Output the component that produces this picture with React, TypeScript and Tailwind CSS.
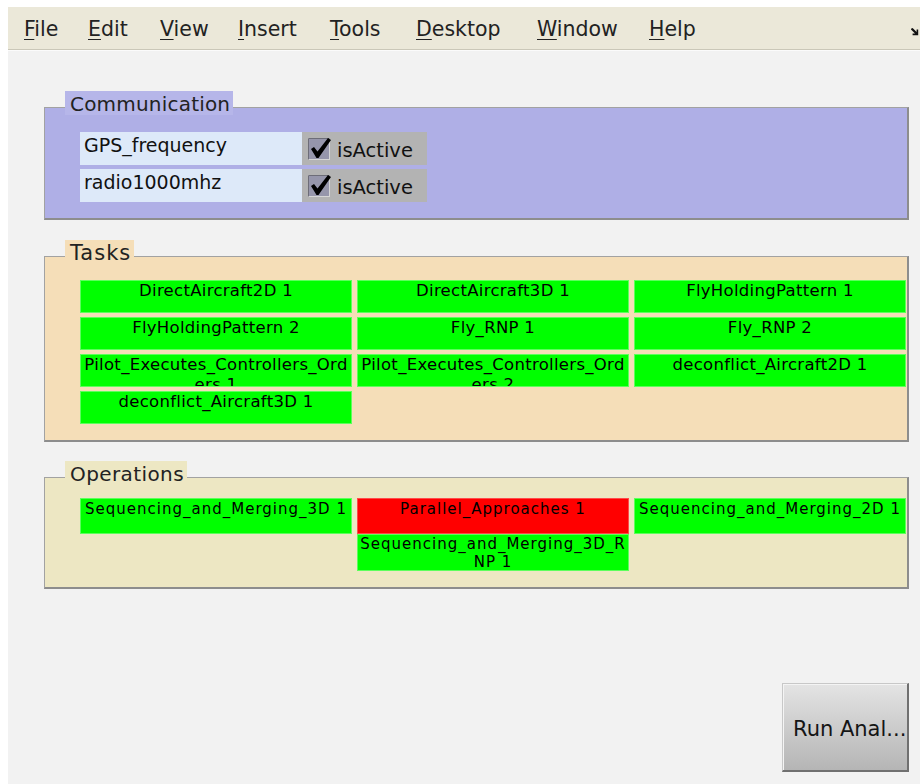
import React from "react";

type MenuItem = { label: string; cls: string };

const menus: MenuItem[] = [
  { label: "File", cls: "w-[64px]" },
  { label: "Edit", cls: "w-[72px]" },
  { label: "View", cls: "w-[78px]" },
  { label: "Insert", cls: "w-[92px]" },
  { label: "Tools", cls: "w-[86px]" },
  { label: "Desktop", cls: "w-[121px]" },
  { label: "Window", cls: "w-[112px]" },
  { label: "Help", cls: "w-[60px]" },
];

function MenuBar() {
  return (
    <nav className="h-[43px] shrink-0 bg-[#ebe8d9] border-b border-[#cac7b8] flex items-center pl-[16px] pt-[1px] text-[20.5px] text-[#222]">
      {menus.map((m) => (
        <span key={m.label} className={`${m.cls} shrink-0 leading-[24px]`}>
          <span className="underline decoration-1 underline-offset-[3px]">{m.label[0]}</span>
          {m.label.slice(1)}
        </span>
      ))}
      <svg className="ml-auto mt-[6px] mr-[1px] shrink-0" width="8" height="8" viewBox="0 0 10 10">
        <path d="M0 1 L2 0 L7 5 L7 2 L9 2 L9 9 L2 9 L2 7 L5 7 L0 2 Z" fill="#111" />
      </svg>
    </nav>
  );
}

function CheckBox() {
  return (
    <svg width="24" height="22" viewBox="0 0 24 22" className="overflow-visible shrink-0">
      <rect x="0.5" y="0.5" width="21" height="21" fill="#9696ab" stroke="#d6d6d6" />
      <path d="M0.5 21.5 L0.5 0.5 L21.5 0.5" fill="none" stroke="#6d6d78" />
      <path d="M3 11 L6 9 L9.5 13.5 L20 0 L23 2 L10.5 20 L8.5 20 Z" fill="#000" />
    </svg>
  );
}

function ChannelRow({ name }: { name: string }) {
  return (
    <div className="flex h-[33px]">
      <div className="w-[222px] bg-[#dde9f9] pl-[4px] pt-[1px] text-[19px] leading-[24px] text-[#111]">{name}</div>
      <div className="w-[125px] bg-[#b3b3b3] flex items-center pl-[6px] pt-[1px] gap-[5px]">
        <CheckBox />
        <span className="text-[19.5px] leading-[24px] text-[#111] pt-[3px]">isActive</span>
      </div>
    </div>
  );
}

function Legend({ text, cls }: { text: string; cls: string }) {
  return (
    <h2 className={`absolute left-[20px] top-[-17px] h-[24px] pl-[5px] pr-[3px] leading-[24px] pt-[1px] text-[#222] font-normal ${cls}`}>
      {text}
    </h2>
  );
}

function TaskTile({ children }: { children: React.ReactNode }) {
  return (
    <div className="h-[33px] bg-[#00ff00] border border-[#5cff5c] text-center text-[16.5px] tracking-[0.3px] leading-[20px] text-black overflow-hidden whitespace-nowrap">
      {children}
    </div>
  );
}

function OpTile({ children, red, tall }: { children: React.ReactNode; red?: boolean; tall?: boolean }) {
  return (
    <div
      className={`${tall ? "h-[37px] leading-[18px]" : "h-[36px] leading-[19px] pt-[1px]"} ${
        red ? "bg-[#ff0000] border-[#ff4a4a]" : "bg-[#00ff00] border-[#5cff5c]"
      } border text-center text-[15px] tracking-[1px] text-black overflow-hidden whitespace-nowrap`}
    >
      {children}
    </div>
  );
}

export default function App() {
  return (
    <div className="w-[920px] h-[784px] bg-white pl-[8px] pt-[7px] overflow-hidden font-['DejaVu_Sans',sans-serif]">
      <div className="h-full bg-[#f2f2f2] flex flex-col">
        <MenuBar />
        <div className="h-px shrink-0 bg-[#fbfbfb]" />
        <main className="flex-1 pl-[36px] pr-[11px] flex flex-col">
          {/* Communication channels */}
          <section className="relative mt-[56px] bg-[#afafe6] border-t border-l border-[#a2a2a2] border-r-2 border-b-2 border-r-[#8d8d8d] border-b-[#8d8d8d] pl-[35px] pt-[24px] pb-[16px] flex flex-col gap-[4px]">
            <Legend text="Communication" cls="bg-[#b6b6e9] text-[20px] tracking-[0.2px]" />
            <ChannelRow name="GPS_frequency" />
            <ChannelRow name="radio1000mhz" />
          </section>

          {/* Tasks */}
          <section className="relative mt-[36px] bg-[#f5deb8] border-t border-l border-[#a2a2a2] border-r-2 border-b-2 border-r-[#8d8d8d] border-b-[#8d8d8d] pl-[35px] pt-[23px] pb-[16px]">
            <Legend text="Tasks" cls="bg-[#f5deb8] text-[21px] tracking-[1px]" />
            <div className="grid grid-cols-[272px_272px_272px] gap-x-[5px] gap-y-[4px]">
              <TaskTile>DirectAircraft2D 1</TaskTile>
              <TaskTile>DirectAircraft3D 1</TaskTile>
              <TaskTile>FlyHoldingPattern 1</TaskTile>
              <TaskTile>FlyHoldingPattern 2</TaskTile>
              <TaskTile>Fly_RNP 1</TaskTile>
              <TaskTile>Fly_RNP 2</TaskTile>
              <TaskTile>
                Pilot_Executes_Controllers_Ord
                <br />
                ers 1
              </TaskTile>
              <TaskTile>
                Pilot_Executes_Controllers_Ord
                <br />
                ers 2
              </TaskTile>
              <TaskTile>deconflict_Aircraft2D 1</TaskTile>
              <TaskTile>deconflict_Aircraft3D 1</TaskTile>
            </div>
          </section>

          {/* Operations */}
          <section className="relative mt-[35px] bg-[#ede7c3] border-t border-l border-[#a2a2a2] border-r-2 border-b-2 border-r-[#8d8d8d] border-b-[#8d8d8d] pl-[35px] pt-[20px] pb-[16px]">
            <Legend text="Operations" cls="bg-[#ede7c3] text-[20px] tracking-[0.4px]" />
            <div className="grid grid-cols-[272px_272px_272px] gap-x-[5px] items-start">
              <OpTile>Sequencing_and_Merging_3D 1</OpTile>
              <div className="flex flex-col">
                <OpTile red>Parallel_Approaches 1</OpTile>
                <OpTile tall>
                  Sequencing_and_Merging_3D_R
                  <br />
                  NP 1
                </OpTile>
              </div>
              <OpTile>Sequencing_and_Merging_2D 1</OpTile>
            </div>
          </section>

          <div className="mt-[94px] flex justify-end">
            <button className="w-[127px] h-[89px] bg-linear-to-b from-[#e4e4e4] to-[#b5b5b5] border-t border-l border-[#c8c8c8] border-r-2 border-b-2 border-r-[#707070] border-b-[#707070] shadow-[inset_1px_1px_0_#f4f4f4] flex items-center pl-[10px] pt-[6px] text-[21px] text-[#151515]">
              Run Anal...
            </button>
          </div>
        </main>
      </div>
    </div>
  );
}
